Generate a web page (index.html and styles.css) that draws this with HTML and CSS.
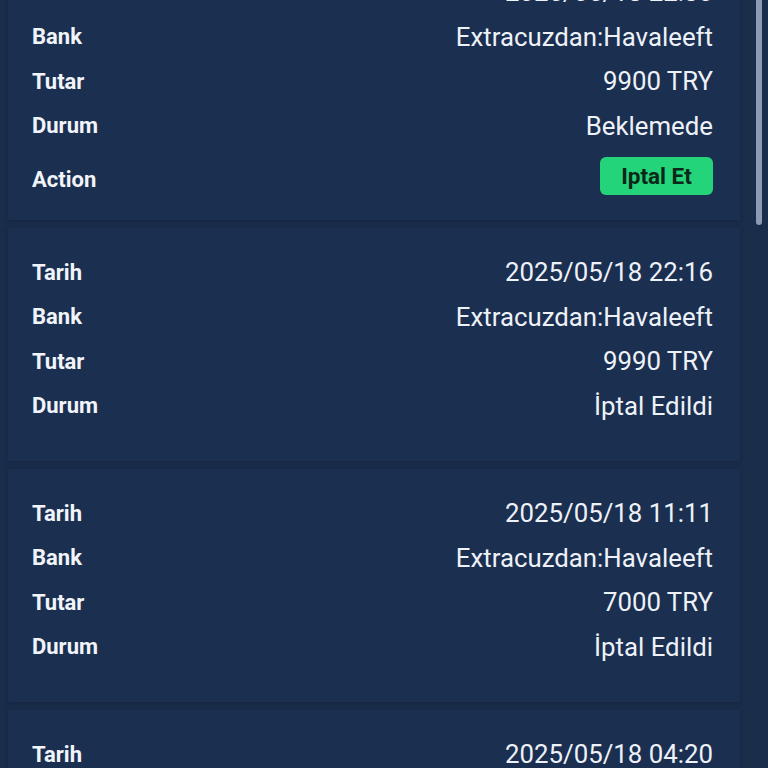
FILE: index.html
```html
<!DOCTYPE html>
<html lang="tr">
<head>
<meta charset="utf-8">
<title>İşlemler</title>
<link rel="stylesheet" href="styles.css">
</head>
<body>
<main class="list">
  <section class="card">
    <div class="row"><span class="label">Tarih</span><span class="value">2025/05/18 22:30</span></div>
    <div class="row"><span class="label">Bank</span><span class="value">Extracuzdan:Havaleeft</span></div>
    <div class="row"><span class="label">Tutar</span><span class="value">9900 TRY</span></div>
    <div class="row"><span class="label">Durum</span><span class="value">Beklemede</span></div>
    <div class="row action"><span class="label">Action</span><button class="btn">Iptal Et</button></div>
  </section>
  <section class="card">
    <div class="row"><span class="label">Tarih</span><span class="value">2025/05/18 22:16</span></div>
    <div class="row"><span class="label">Bank</span><span class="value">Extracuzdan:Havaleeft</span></div>
    <div class="row"><span class="label">Tutar</span><span class="value">9990 TRY</span></div>
    <div class="row"><span class="label">Durum</span><span class="value">İptal Edildi</span></div>
    <div class="foot"></div>
  </section>
  <section class="card">
    <div class="row"><span class="label">Tarih</span><span class="value">2025/05/18 11:11</span></div>
    <div class="row"><span class="label">Bank</span><span class="value">Extracuzdan:Havaleeft</span></div>
    <div class="row"><span class="label">Tutar</span><span class="value">7000 TRY</span></div>
    <div class="row"><span class="label">Durum</span><span class="value">İptal Edildi</span></div>
    <div class="foot"></div>
  </section>
  <section class="card">
    <div class="row"><span class="label">Tarih</span><span class="value">2025/05/18 04:20</span></div>
    <div class="row"><span class="label">Bank</span><span class="value">Extracuzdan:Havaleeft</span></div>
    <div class="row"><span class="label">Tutar</span><span class="value">5000 TRY</span></div>
    <div class="row"><span class="label">Durum</span><span class="value">İptal Edildi</span></div>
    <div class="foot"></div>
  </section>
</main>
<div class="scrollbar"><div class="thumb"></div></div>
</body>
</html>
```
FILE: styles.css
```css
html, body {
  margin: 0;
  padding: 0;
  height: 768px;
  overflow: hidden;
  background: #1a2d4b;
  font-family: Roboto, "Noto Sans", "Liberation Sans", sans-serif;
  color: #f1f4f9;
}

.list {
  display: flex;
  flex-direction: column;
  gap: 8px;
  margin: -52px 28px 0 8px;
}

.card {
  background: #1b2f50;
  padding: 22px 27px 25px 24px;
  box-shadow: 0 1px 4px rgba(12, 22, 42, 0.35);
  display: flex;
  flex-direction: column;
}

.row {
  height: 44.5px;
  display: flex;
  align-items: center;
  justify-content: space-between;
}

.label {
  font-weight: 700;
  font-size: 22px;
}

.value {
  font-weight: 400;
  font-size: 25.8px;
  color: #eef2f8;
}

.row.action {
  height: 38px;
  margin-top: 9px;
}

.row.action .label {
  margin-top: 6px;
}

.foot {
  height: 8px;
}

.btn {
  width: 113px;
  height: 38px;
  border: none;
  border-radius: 6px;
  background: #23d47b;
  color: #0b2717;
  font-family: Roboto, "Noto Sans", "Liberation Sans", sans-serif;
  font-weight: 700;
  font-size: 22.5px;
  padding: 0;
}

.scrollbar {
  position: absolute;
  top: 0;
  right: 6px;
  width: 6px;
  height: 768px;
}

.thumb {
  width: 6px;
  height: 225px;
  background: #8c9ab3;
  border-radius: 0 0 3px 3px;
}
```
